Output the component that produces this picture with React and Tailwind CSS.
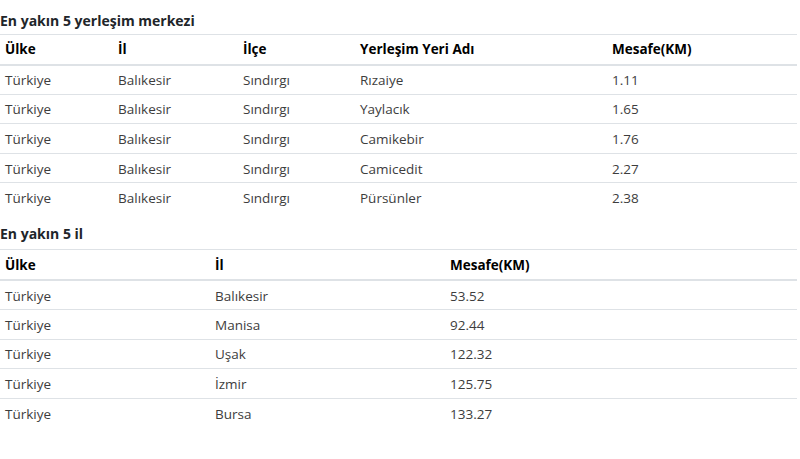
import React from "react";

const settlements = [
  ["Türkiye", "Balıkesir", "Sındırgı", "Rızaiye", "1.11"],
  ["Türkiye", "Balıkesir", "Sındırgı", "Yaylacık", "1.65"],
  ["Türkiye", "Balıkesir", "Sındırgı", "Camikebir", "1.76"],
  ["Türkiye", "Balıkesir", "Sındırgı", "Camicedit", "2.27"],
  ["Türkiye", "Balıkesir", "Sındırgı", "Pürsünler", "2.38"],
];

const cities = [
  ["Türkiye", "Balıkesir", "53.52"],
  ["Türkiye", "Manisa", "92.44"],
  ["Türkiye", "Uşak", "122.32"],
  ["Türkiye", "İzmir", "125.75"],
  ["Türkiye", "Bursa", "133.27"],
];

const DataTable = ({ headers, widths, rows }) => {
  return (
    <table className="w-[797px] table-fixed border-collapse mb-[12px]">
      <colgroup>
        {widths.map((w, i) => (
          <col key={i} style={{ width: w }} />
        ))}
      </colgroup>
      <thead>
        <tr className="border-t border-[#dee2e6] border-b-2">
          {headers.map((h) => (
            <th key={h} className="text-left font-bold text-black px-[5px] pt-[1px] h-[30px] leading-[19px] align-middle">
              {h}
            </th>
          ))}
        </tr>
      </thead>
      <tbody>
        {rows.map((row, i) => (
          <tr key={i} className={i === 0 ? "" : "border-t border-[#dee2e6]"}>
            {row.map((cell, j) => (
              <td key={j} className="px-[5px] pt-[2px] h-[29.6px] leading-[19px] align-middle text-[#3d3d3d]">
                {cell}
              </td>
            ))}
          </tr>
        ))}
      </tbody>
    </table>
  );
};

export default function App() {
  return (
    <div className="bg-white w-[800px] h-[459px] text-[13.5px] font-['Segoe_UI','Open_Sans',sans-serif] text-[#212529]">
      <h5 className="pt-[11px] mb-[3px] leading-[20px] text-[14px] font-bold text-[#212529]">
        En yakın 5 yerleşim merkezi
      </h5>
      <DataTable
        headers={["Ülke", "İl", "İlçe", "Yerleşim Yeri Adı", "Mesafe(KM)"]}
        widths={["113px", "125px", "117px", "252px", "190px"]}
        rows={settlements}
      />
      <h5 className="mb-[5px] leading-[20px] text-[14px] font-bold text-[#212529]">En yakın 5 il</h5>
      <DataTable
        headers={["Ülke", "İl", "Mesafe(KM)"]}
        widths={["210px", "235px", "352px"]}
        rows={cities}
      />
    </div>
  );
}
